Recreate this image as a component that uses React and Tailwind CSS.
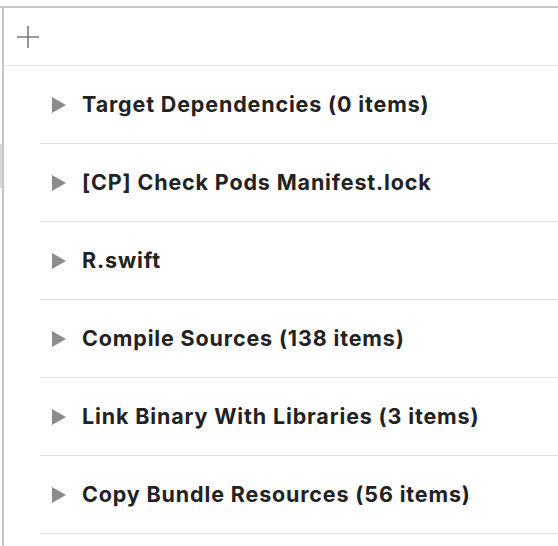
import React from "react";

const phases = [
  "Target Dependencies (0 items)",
  "[CP] Check Pods Manifest.lock",
  "R.swift",
  "Compile Sources (138 items)",
  "Link Binary With Libraries (3 items)",
  "Copy Bundle Resources (56 items)",
];

const Triangle = () => (
  <svg width="14" height="16" viewBox="0 0 14 16" className="shrink-0">
    <path d="M0 0 L14 8 L0 16 Z" fill="#8c8c8c" />
  </svg>
);

export default function App() {
  return (
    <div
      className="w-[558px] h-[546px] bg-white overflow-hidden pt-[6px]"
      style={{ fontFamily: "Inter, 'Liberation Sans', sans-serif" }}
    >
      <div className="h-full border-t-2 border-[#c6c6c6] flex">
        {/* left gutter with selection marker from neighbouring view */}
        <div className="w-[2px] shrink-0">
          <div className="mt-[136px] h-[44px] bg-[#d8d8d8]" />
        </div>

        <div className="flex-1 border-l-2 border-[#c6c6c6] flex flex-col">
          {/* toolbar */}
          <div className="h-[58px] shrink-0 flex items-center pl-[13px] border-b border-[#e2e2e2]">
            <svg width="22" height="22" viewBox="0 0 22 22">
              <path d="M11 0 V22 M0 11 H22" stroke="#7c7c7c" strokeWidth="1.6" />
            </svg>
          </div>

          {/* build phases */}
          <ul className="pl-[36px]">
            {phases.map((name) => (
              <li
                key={name}
                className="h-[78px] flex items-center gap-[16px] pl-[12px] border-b border-[#e2e2e2]"
              >
                <Triangle />
                <span className="text-[21.5px] font-bold text-[#222222] tracking-[0.85px]">
                  {name}
                </span>
              </li>
            ))}
          </ul>
        </div>
      </div>
    </div>
  );
}
